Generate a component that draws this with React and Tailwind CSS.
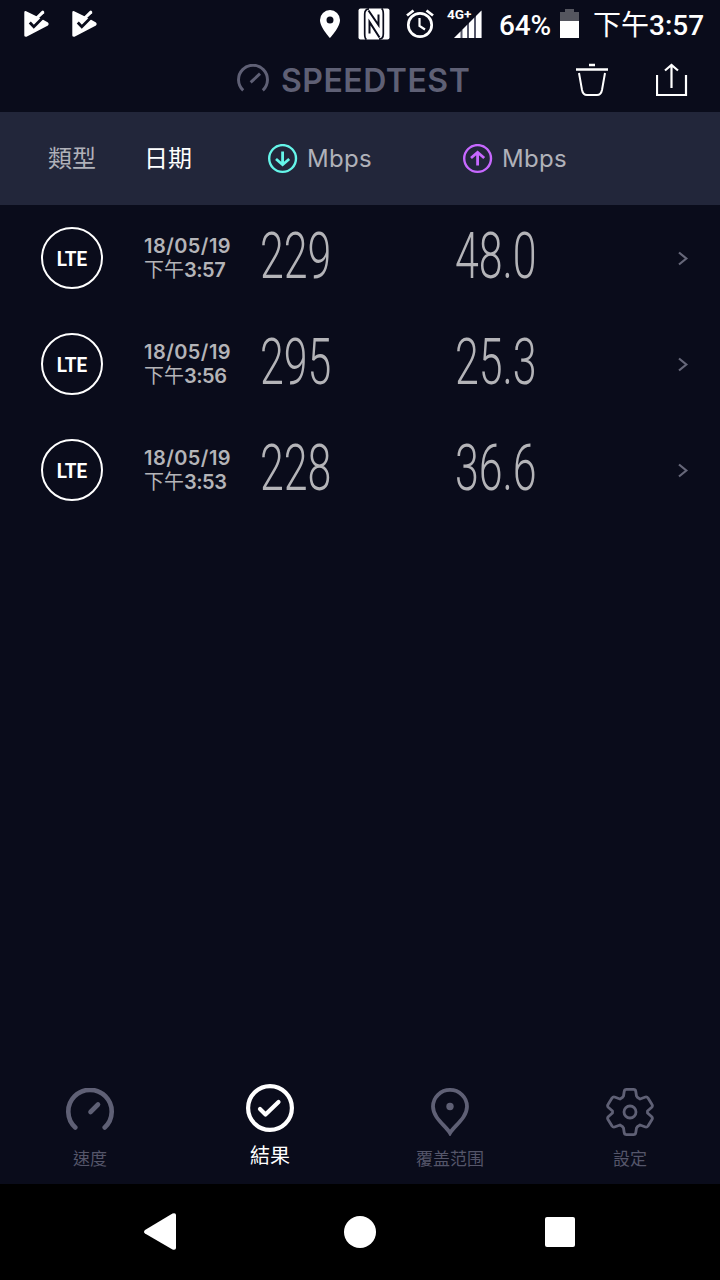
const results = [
  { time: "3:57", down: "229", up: "48.0" },
  { time: "3:56", down: "295", up: "25.3" },
  { time: "3:53", down: "228", up: "36.6" },
];

function PlayCheck() {
  return (
    <svg className="h-7 w-7 shrink-0" viewBox="0 0 28 28">
      <path d="M2.300 2.500Q2.300 .7 4.200 1.200L15.500 6.800L20.800 2L22.500 3.600L19.800 9L26 12.400Q27.500 14 26 15.500L4.500 26.800Q2.300 27 2.300 25.500Z" fill="#fff" />
      <path d="M16.500 7.600L21.300 3.800L23.500 3L20.500 9.600Z" fill="#0a0c1b" />
      <path d="M7.800 12.500L11.800 16.800L20.500 8" stroke="#0a0c1b" strokeWidth="2.800" fill="none" />
      <path d="M14 8.800L20.800 2.200" stroke="#fff" strokeWidth="3" strokeLinecap="round" />
    </svg>
  );
}

function StatusBar() {
  return (
    <header className="flex h-12 items-center text-white">
      <div className="ml-[22px] flex w-[298px] gap-5">
        <PlayCheck />
        <PlayCheck />
      </div>
      <svg className="h-12 w-[170px] shrink-0" viewBox="320 0 170 48" fill="none">
        <path fillRule="evenodd" d="M330 10a10 10 0 0 0-10 10c0 7.500 10 18 10 18s10-10.500 10-18a10 10 0 0 0-10-10Zm0 6.500a3.500 3.500 0 1 1 0 7 3.500 3.500 0 0 1 0-7Z" fill="#fff" />
        <rect x="358.500" y="8.500" width="31" height="31" rx="2" fill="#fff" />
        <path d="M369 8.800Q364.700 9 364.700 14V34Q364.700 38.500 366.500 39.500M379 39.200Q383.300 39 383.300 34V14Q383.300 9.500 381.500 8.500" stroke="#0a0c1b" strokeWidth="1.700" />
        <path d="M368.500 10.500L378.500 25V14.500M379.500 37.500L369.500 22V33.500" stroke="#0a0c1b" strokeWidth="2" />
        <circle cx="420" cy="25" r="11.700" stroke="#fff" strokeWidth="2.700" />
        <path d="M419.500 18V26L425 29.500" stroke="#fff" strokeWidth="2.200" />
        <path d="M407 15.500L413.500 10.500M433 15.500L426.500 10.500" stroke="#fff" strokeWidth="2.800" />
        <path d="M454 38L481.500 10.500V38Z" fill="#55576a" />
        <path d="M454 38L460.500 31.500V38ZM462.500 29.500L467 25V38H462.500ZM469 23L474 18V38H469ZM476 16L481.500 10.500V38H476Z" fill="#fff" />
        <text x="447" y="18.500" fill="#fff" fontSize="13.500" fontWeight="700" fontFamily="Roboto, sans-serif" textLength="24.500" lengthAdjust="spacingAndGlyphs">4G+</text>
      </svg>
      <span className="ml-[9px] w-[61px] whitespace-nowrap pt-[3px] font-[Roboto,sans-serif] text-[28px] leading-8 font-medium tracking-[-0.2px]">64%</span>
      <svg className="h-[30px] w-5 shrink-0" viewBox="0 0 20 30">
        <path d="M0 3H5V0H14V3H19V12H0Z" fill="#55565f" />
        <path d="M0 12H19V29H0Z" fill="#fff" />
      </svg>
      <span className="ml-[13px] whitespace-nowrap font-[Roboto,'Noto_Sans_CJK_TC',sans-serif] text-[28px] leading-8 font-medium">
        <span className="font-['Noto_Sans_CJK_TC',sans-serif] font-normal">下午</span>3:57
      </span>
    </header>
  );
}

function Gauge({ className, width, cap, needle }) {
  return (
    <svg className={className} viewBox="0 0 48 48" fill="none" stroke="currentColor" strokeWidth={width} strokeLinecap={cap}>
      <path d="M9.300 39.500A21.700 21.700 0 1 1 38.700 39.500" />
      <path d={needle} />
    </svg>
  );
}

function TitleBar() {
  return (
    <div className="flex h-16 items-center text-[#5f6075]">
      <Gauge className="ml-[237px] h-8 w-8 shrink-0" width={4.4} cap="butt" needle="M20.500 27.500L34.500 14.500" />
      <h1 className="ml-3 w-[295px] whitespace-nowrap pt-[2px] font-[Inter,sans-serif] text-[32px] leading-10 font-semibold tracking-[0.5px]">
        SPEEDTEST
      </h1>
      <svg className="h-9 w-8 shrink-0" viewBox="576 62 32 36" fill="none" stroke="#fff" strokeWidth="2">
        <path d="M589 65H595M576 69.500H608" strokeWidth="2.300" />
        <path d="M579 73L582 90Q583 95 587 95H597Q601 95 602 90L605 73" />
      </svg>
      <svg className="ml-12 h-9 w-8 shrink-0" viewBox="656 62 32 36" fill="none" stroke="#fff" strokeWidth="2.200">
        <path d="M657 75V95H686V75M671.500 88V65.500M665 70.500L671.500 65L678 70.500" />
      </svg>
    </div>
  );
}

function RoundArrow({ up }) {
  return (
    <svg className="h-[30px] w-[30px] shrink-0" viewBox="0 0 30 30" fill="none" stroke={up ? "#c768ff" : "#65f5e9"} strokeWidth="2.400">
      <circle cx="14.600" cy="14.500" r="13.400" />
      <path d={up ? "M14.600 21.500V9M8 14L14.600 8.300L21.200 14" : "M14.600 7.500V20M8 15L14.600 20.700L21.200 15"} strokeWidth="2.800" />
    </svg>
  );
}

function ColumnHeads() {
  return (
    <div className="flex h-[93px] items-center bg-[#22263a] text-2xl text-[#b0b1b9]">
      <span className="ml-12 w-24 pb-[3px] font-['Noto_Sans_CJK_TC',sans-serif]">類型</span>
      <span className="w-[124px] pb-[3px] font-['Noto_Sans_CJK_TC',sans-serif] text-white">日期</span>
      <div className="flex w-[195px] items-center gap-[9px]">
        <RoundArrow />
        <span className="font-[Inter,sans-serif] tracking-[0.3px]">Mbps</span>
      </div>
      <div className="flex items-center gap-[9px]">
        <RoundArrow up />
        <span className="font-[Inter,sans-serif] tracking-[0.3px]">Mbps</span>
      </div>
    </div>
  );
}

function Reading({ children }) {
  return (
    <div className="w-[195px] pb-1">
      <span className="inline-block origin-left scale-x-[0.66] font-[Roboto,sans-serif] text-[65px] leading-[70px] font-light">
        {children}
      </span>
    </div>
  );
}

function ResultRow({ time, down, up }) {
  return (
    <li className="flex h-[106px] items-center text-[#b4b4b8]">
      <div className="ml-[41px] flex h-[62px] w-[62px] shrink-0 items-center justify-center rounded-full border-2 border-white text-white">
        <span className="scale-x-[0.9] pt-px font-[Roboto,sans-serif] text-[21px] leading-6 font-bold">LTE</span>
      </div>
      <div className="ml-[41px] w-[116px] whitespace-nowrap font-[Inter,'Noto_Sans_CJK_TC',sans-serif] text-[20px] leading-6 font-semibold">
        <div className="tracking-[0.45px]">18/05/19</div>
        <div className="-mt-px tracking-[-0.5px]">
          <span className="font-['Noto_Sans_CJK_TC',sans-serif] font-normal tracking-normal">下午</span>
          {time}
        </div>
      </div>
      <Reading>{down}</Reading>
      <Reading>{up}</Reading>
      <svg className="ml-[28px] h-4 w-3 shrink-0" viewBox="0 0 12 16" fill="none" stroke="#666779" strokeWidth="2.200">
        <path d="M1 2.500L8.300 8.500L1 14.500" />
      </svg>
    </li>
  );
}

function Tabs() {
  return (
    <nav className="grid h-[104px] grid-cols-4 font-['Noto_Sans_CJK_TC',sans-serif] text-[17px] text-[#55566a]">
      <div className="flex flex-col items-center pt-2">
        <Gauge className="h-12 w-12 text-[#5f6075]" width={4.6} cap="round" needle="M24.500 24L32 16.500" />
        <span className="mt-2 leading-7">速度</span>
      </div>
      <div className="flex flex-col items-center pt-1 text-[20px] text-white">
        <svg className="h-12 w-12" viewBox="0 0 48 48" fill="none" stroke="currentColor" strokeWidth="4.200" strokeLinecap="round" strokeLinejoin="round">
          <circle cx="24" cy="24" r="21.900" />
          <path d="M14 25L19.500 30.500L32.500 18" />
        </svg>
        <span className="mt-[9px] leading-7">結果</span>
      </div>
      <div className="flex flex-col items-center pt-2">
        <svg className="h-12 w-12" viewBox="0 0 48 48" fill="none" stroke="#5f6075" strokeWidth="3.800">
          <path d="M24 45C20 38 7 30 7 18.500A17 16.600 0 0 1 41 18.500C41 30 28 38 24 45Z" />
          <circle cx="24" cy="18.500" r="3.700" fill="#5f6075" stroke="none" />
        </svg>
        <span className="mt-2 leading-7">覆盖范围</span>
      </div>
      <div className="flex flex-col items-center pt-2">
        <svg className="h-12 w-12" viewBox="0 0 48 48" fill="none" stroke="#5f6075" strokeWidth="2.800" strokeLinejoin="round">
          <path d="M20.500 1.400H27.500Q29.500 1.400 29.800 3.500L30.500 8Q31 9.500 34 11L39.500 9Q41 8.700 42 10L46 16.500Q47 18 45.500 19.500L41.500 23V25L45.500 28.500Q47 30 46 31.500L42 38Q41 39.300 39.500 39L34 37Q31 38.500 30.500 40L29.800 44.500Q29.500 46.600 27.500 46.600H20.500Q18.500 46.600 18.200 44.500L17.500 40Q17 38.500 14 37L8.500 39Q7 39.300 6 38L2 31.500Q1 30 2.500 28.500L6.500 25V23L2.500 19.500Q1 18 2 16.500L6 10Q7 8.700 8.500 9L14 11Q17 9.500 17.500 8L18.200 3.500Q18.500 1.400 20.500 1.400Z" />
          <circle cx="24" cy="24" r="6" />
        </svg>
        <span className="mt-2 leading-7">設定</span>
      </div>
    </nav>
  );
}

function SystemNav() {
  return (
    <div className="flex h-24 items-center bg-black">
      <svg className="ml-[143px] h-10 w-[34px]" viewBox="0 0 34 40">
        <path d="M2 18L29.500 1.500Q33 .5 33 3V36Q33 38.500 29.500 37.500L2 21.500Q0 20 2 18Z" fill="#fff" />
      </svg>
      <div className="ml-[167px] h-8 w-8 rounded-full bg-white" />
      <div className="ml-[169px] h-[30px] w-[30px] rounded-[2px] bg-white" />
    </div>
  );
}

export default function App() {
  return (
    <div className="flex h-[1280px] w-[720px] flex-col overflow-hidden bg-[#0a0c1b]">
      <StatusBar />
      <TitleBar />
      <ColumnHeads />
      <ul className="grow">
        {results.map((r) => (
          <ResultRow key={r.time} {...r} />
        ))}
      </ul>
      <Tabs />
      <SystemNav />
    </div>
  );
}
